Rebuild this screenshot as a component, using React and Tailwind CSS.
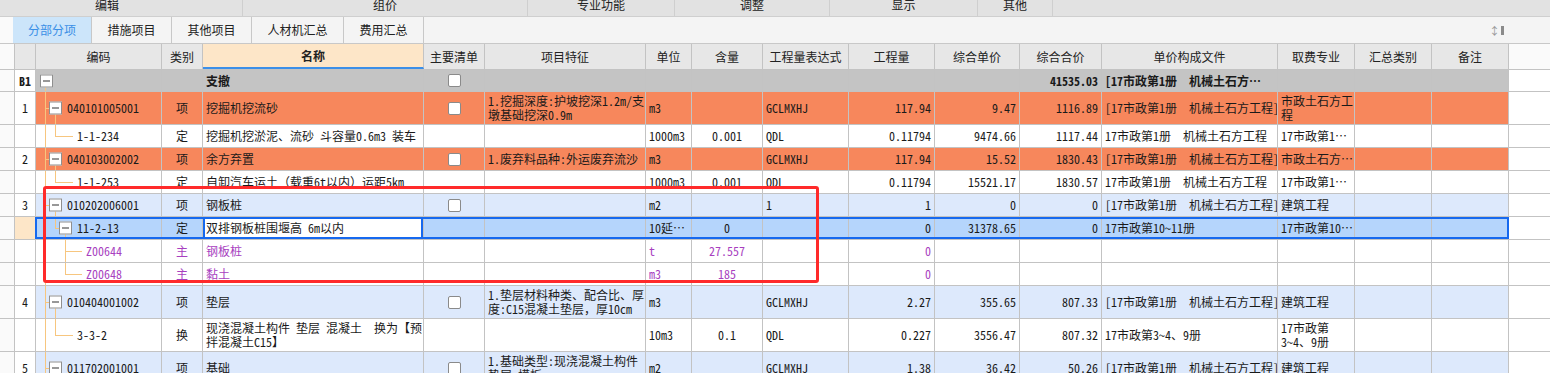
import React from 'react';

const FONT = "font-['Noto_Sans_Mono_CJK_SC','Noto_Sans_CJK_SC',sans-serif]";

const ORANGE = 'bg-[#f7875c]';
const GRAY = 'bg-[#c4c4c4]';
const BLUE = 'bg-[#dde9fc]';
const SEL = 'bg-[#b5d5fc]';
const WHITE = 'bg-white';

const COLS = {
  code: 'w-[126px]',
  type: 'w-[41px]',
  name: 'w-[221px]',
  main: 'w-[61px]',
  feat: 'w-[161px]',
  unit: 'w-[46px]',
  content: 'w-[71px]',
  expr: 'w-[86px]',
  qty: 'w-[86px]',
  price: 'w-[85px]',
  total: 'w-[82px]',
  file: 'w-[176px]',
  fee: 'w-[77px]',
  sum: 'w-[77px]',
  note: 'w-[77px]',
};

const FILE1 = '[17市政第1册　机械土石方工程]';
const FILE2 = '17市政第1册　机械土石方工程';

const rows = [
  { h: 'h-[22px]', bg: GRAY, num: 'B1', tree: 'root', name: '支撤', check: true, total: '41535.03', file: '[17市政第1册　机械土石方…', bold: true },
  { h: 'h-[33px]', bg: ORANGE, num: '1', tree: 'l1', code: '040101005001', type: '项', name: '挖掘机挖流砂', check: true, feat: ['1.挖掘深度:护坡挖深1.2m/支', '墩基础挖深0.9m'], unit: 'm3', expr: 'GCLMXHJ', qty: '117.94', price: '9.47', total: '1116.89', file: FILE1, fee: ['市政土石方工', '程'] },
  { h: 'h-[23px]', bg: WHITE, tree: 'l2', code: '1-1-234', type: '定', name: '挖掘机挖淤泥、流砂 斗容量0.6m3 装车', unit: '1000m3', content: '0.001', expr: 'QDL', qty: '0.11794', price: '9474.66', total: '1117.44', file: FILE2, fee: '17市政第1…' },
  { h: 'h-[23px]', bg: ORANGE, num: '2', tree: 'l1', code: '040103002002', type: '项', name: '余方弃置', check: true, feat: '1.废弃料品种:外运废弃流沙', unit: 'm3', expr: 'GCLMXHJ', qty: '117.94', price: '15.52', total: '1830.43', file: FILE1, fee: '市政土石方…' },
  { h: 'h-[23px]', bg: WHITE, tree: 'l2', code: '1-1-253', type: '定', name: '自卸汽车运土（载重6t以内）运距5km', unit: '1000m3', content: '0.001', expr: 'QDL', qty: '0.11794', price: '15521.17', total: '1830.57', file: FILE2, fee: '17市政第1…' },
  { h: 'h-[23px]', bg: BLUE, num: '3', tree: 'l1', code: '010202006001', type: '项', name: '钢板桩', check: true, unit: 'm2', expr: '1', qty: '1', price: '0', total: '0', file: FILE1, fee: '建筑工程' },
  { h: 'h-[23px]', bg: SEL, tree: 'l2box', code: '11-2-13', type: '定', name: '双排钢板桩围堰高 6m以内', unit: '10延…', content: '0', qty: '0', price: '31378.65', total: '0', file: '17市政第10~11册', fee: '17市政第10…', selected: true },
  { h: 'h-[23px]', bg: WHITE, tree: 'l3', code: 'Z00644', type: '主', name: '钢板桩', unit: 't', content: '27.557', qty: '0', purple: true },
  { h: 'h-[23px]', bg: WHITE, tree: 'l3last', code: 'Z00648', type: '主', name: '黏土', unit: 'm3', content: '185', qty: '0', purple: true },
  { h: 'h-[33px]', bg: BLUE, num: '4', tree: 'l1', code: '010404001002', type: '项', name: '垫层', check: true, feat: ['1.垫层材料种类、配合比、厚', '度:C15混凝土垫层，厚10cm'], unit: 'm3', expr: 'GCLMXHJ', qty: '2.27', price: '355.65', total: '807.33', file: FILE1, fee: '建筑工程' },
  { h: 'h-[33px]', bg: WHITE, tree: 'l2', code: '3-3-2', type: '换', name: ['现浇混凝土构件 垫层 混凝土　换为【预', '拌混凝土C15】'], unit: '10m3', content: '0.1', expr: 'QDL', qty: '0.227', price: '3556.47', total: '807.32', file: '17市政第3~4、9册', fee: ['17市政第', '3~4、9册'] },
  { h: 'h-[33px]', bg: BLUE, num: '5', tree: 'l1', code: '011702001001', type: '项', name: '基础', check: true, feat: ['1.基础类型:现浇混凝土构件', '垫层 模板'], unit: 'm2', expr: 'GCLMXHJ', qty: '1.38', price: '36.42', total: '50.26', file: FILE1, fee: '建筑工程' },
];

function Lines({ v }) {
  if (Array.isArray(v)) {
    return (
      <div className="leading-[14px]">
        {v.map((l, i) => <div key={i} className="whitespace-nowrap">{l}</div>)}
      </div>
    );
  }
  return <span className="whitespace-nowrap">{v}</span>;
}

function Cell({ w, align = 'left', children, className = '' }) {
  const a = align === 'center' ? 'justify-center' : align === 'right' ? 'justify-end pr-[3px]' : 'justify-start pl-[3px]';
  return (
    <div className={`${w} shrink-0 h-full border-r border-[#c3c3c3] flex items-center overflow-hidden ${a} ${className}`}>
      {children}
    </div>
  );
}

function Box({ left }) {
  return (
    <div className={`absolute top-1/2 -translate-y-1/2 w-[13px] h-[13px] border border-[#8f8f8f] bg-white flex items-center justify-center ${left}`}>
      <div className="w-[7px] h-px bg-[#333]" />
    </div>
  );
}

const LINE = 'absolute bg-[#f7c67f]';

function Tree({ type }) {
  const trunk = <div className={`${LINE} left-[9px] w-px top-0 bottom-0`} />;
  if (type === 'root') {
    return (
      <>
        <div className={`${LINE} left-[9px] w-px top-[calc(50%+6px)] bottom-0`} />
        <Box left="left-[4px]" />
      </>
    );
  }
  if (type === 'l1') {
    return (
      <>
        {trunk}
        <div className={`${LINE} left-[9px] w-[4px] h-px top-1/2`} />
        <div className={`${LINE} left-[19px] w-px top-[calc(50%+6px)] bottom-0`} />
        <Box left="left-[13px]" />
      </>
    );
  }
  if (type === 'l2') {
    return (
      <>
        {trunk}
        <div className={`${LINE} left-[19px] w-px top-0 h-1/2`} />
        <div className={`${LINE} left-[19px] w-[18px] h-px top-1/2`} />
      </>
    );
  }
  if (type === 'l2box') {
    return (
      <>
        {trunk}
        <div className={`${LINE} left-[19px] w-px top-0 h-1/2`} />
        <div className={`${LINE} left-[19px] w-[4px] h-px top-1/2`} />
        <div className={`${LINE} left-[29px] w-px top-[calc(50%+6px)] bottom-0`} />
        <Box left="left-[23px]" />
      </>
    );
  }
  return (
    <>
      {trunk}
      <div className={`${LINE} left-[29px] w-px top-0 ${type === 'l3' ? 'bottom-0' : 'h-1/2'}`} />
      <div className={`${LINE} left-[29px] w-[17px] h-px top-1/2`} />
    </>
  );
}

function Check() {
  return <div className="w-[13px] h-[13px] border border-[#8a8a8a] rounded-[2px] bg-white" />;
}

const PAD = { root: '', l1: 'pl-[31px]', l2: 'pl-[41px]', l2box: 'pl-[41px]', l3: 'pl-[50px]', l3last: 'pl-[50px]' };

function Row({ r }) {
  const txt = r.purple ? 'text-[#a83fbf]' : 'text-[#1a1a1a]';
  const b = r.bold ? 'font-bold' : '';
  return (
    <div className={`relative flex ${r.h} border-b border-[#c3c3c3] ${r.bg} ${txt}`}>
      <div className="w-[15px] shrink-0 h-full bg-[#fafafa] border-r border-[#c3c3c3]" />
      <div className={`w-[21px] shrink-0 h-full border-r border-[#c3c3c3] flex items-center justify-center text-[#1a1a1a] ${r.selected ? 'bg-[#fde6c8]' : 'bg-white'} ${b}`}>
        {r.num}
      </div>
      <div className={`${COLS.code} shrink-0 h-full relative border-r border-[#c3c3c3] flex items-center ${PAD[r.tree]}`}>
        <Tree type={r.tree} />
        <span className="whitespace-nowrap">{r.code}</span>
      </div>
      <Cell w={COLS.type} align="center">{r.type}</Cell>
      <Cell w={COLS.name} className={`${b} ${r.selected ? 'bg-white relative' : ''}`}>
        {r.selected && <div className="absolute inset-0 border-2 border-[#1669ef]" />}
        {r.name && <Lines v={r.name} />}
      </Cell>
      <Cell w={COLS.main} align="center">{r.check && <Check />}</Cell>
      <Cell w={COLS.feat}>{r.feat && <Lines v={r.feat} />}</Cell>
      <Cell w={COLS.unit}>{r.unit}</Cell>
      <Cell w={COLS.content} align="center">{r.content}</Cell>
      <Cell w={COLS.expr}>{r.expr}</Cell>
      <Cell w={COLS.qty} align="right">{r.qty}</Cell>
      <Cell w={COLS.price} align="right">{r.price}</Cell>
      <Cell w={COLS.total} align="right" className={b}>{r.total}</Cell>
      <Cell w={COLS.file} className={b}>{r.file && <Lines v={r.file} />}</Cell>
      <Cell w={COLS.fee}>{r.fee && <Lines v={r.fee} />}</Cell>
      <Cell w={COLS.sum} />
      <Cell w={COLS.note} />
      <div className="flex-1 h-full bg-white" />
      {r.selected && <div className="absolute left-[35px] top-0 bottom-0 w-[1474px] border-2 border-[#1669ef]" />}
    </div>
  );
}

function Header() {
  const cls = 'shrink-0 h-full border-r border-[#c3c3c3] flex items-center justify-center';
  return (
    <div className="flex h-[26px] border-b border-[#c3c3c3] bg-[#e7e7e7] text-[#222]">
      <div className="w-[15px] shrink-0 h-full bg-[#fafafa] border-r border-[#c3c3c3]" />
      <div className={`w-[21px] ${cls}`} />
      <div className={`${COLS.code} ${cls}`}>编码</div>
      <div className={`${COLS.type} ${cls}`}>类别</div>
      <div className={`${COLS.name} ${cls} bg-[#fde6c8] font-bold border-b-2 border-b-[#3b8fe8]`}>名称</div>
      <div className={`${COLS.main} ${cls}`}>主要清单</div>
      <div className={`${COLS.feat} ${cls}`}>项目特征</div>
      <div className={`${COLS.unit} ${cls}`}>单位</div>
      <div className={`${COLS.content} ${cls}`}>含量</div>
      <div className={`${COLS.expr} ${cls}`}>工程量表达式</div>
      <div className={`${COLS.qty} ${cls}`}>工程量</div>
      <div className={`${COLS.price} ${cls}`}>综合单价</div>
      <div className={`${COLS.total} ${cls}`}>综合合价</div>
      <div className={`${COLS.file} ${cls}`}>单价构成文件</div>
      <div className={`${COLS.fee} ${cls}`}>取费专业</div>
      <div className={`${COLS.sum} ${cls}`}>汇总类别</div>
      <div className={`${COLS.note} ${cls}`}>备注</div>
      <div className="flex-1 h-full bg-[#fafafa]" />
    </div>
  );
}

export default function App() {
  const menus = [
    ['编辑', 'w-[243px] pr-[28px]'],
    ['组价', 'w-[285px]'],
    ['专业功能', 'w-[147px]'],
    ['调整', 'w-[155px]'],
    ['显示', 'w-[148px]'],
    ['其他', 'w-[75px]'],
  ];
  const tabs = ['分部分项', '措施项目', '其他项目', '人材机汇总', '费用汇总'];
  const tabW = ['w-[79px]', 'w-[80px]', 'w-[80px]', 'w-[92px]', 'w-[80px]'];

  return (
    <div className={`relative w-[1550px] h-[373px] overflow-hidden bg-white text-[12px] leading-none ${FONT}`}>
      {/* ribbon group labels */}
      <div className="flex h-[17px] bg-[#e2e2e2] border-b border-[#cfcfcf] overflow-hidden text-[12px] font-medium text-[#222]">
        {menus.map(([t, w]) => (
          <div key={t} className={`${w} shrink-0 h-full border-r border-[#cfcfcf] flex justify-center items-start`}>
            <span className="-mt-[1px]">{t}</span>
          </div>
        ))}
        <div className="flex-1" />
      </div>

      {/* tabs */}
      <div className="flex h-[27px] bg-[#f4f4f4] border-b border-[#c8c8c8] text-[#222]">
        <div className="w-[13px] shrink-0 h-full bg-[#fafafa]" />
        {tabs.map((t, i) => (
          <div
            key={t}
            className={`${tabW[i]} shrink-0 h-full border-r border-l-0 border-[#c8c8c8] flex items-center justify-center ${i === 0 ? 'bg-[#cce5fa] text-[#3a8fe6] border-l' : 'bg-[#f4f4f4]'}`}
          >
            {t}
          </div>
        ))}
        <div className="flex-1" />
        <div className="flex items-center gap-[1px] mr-[46px] text-[#9a9a9a]">
          <span className="text-[11px]">↕</span>
          <div className="w-[3px] h-[9px] bg-[#8a8a8a]" />
        </div>
      </div>

      <Header />
      {rows.map((r, i) => <Row key={i} r={r} />)}

      {/* red annotation box */}
      <div className="absolute left-[43px] top-[186px] w-[776px] h-[97px] border-[3px] border-[#ff2a2a] rounded-[3px]" />
    </div>
  );
}
